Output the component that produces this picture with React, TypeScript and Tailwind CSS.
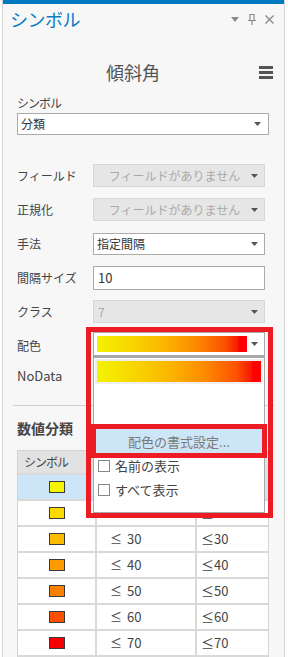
import React from "react";

const FONT = "font-['Segoe_UI','Noto_Sans_CJK_JP',sans-serif]";
const GRAD =
  "bg-[linear-gradient(90deg,#f3f300_0%,#f9d200_25%,#fcb400_45%,#fd8c00_65%,#fc5200_85%,#f81800_94%,#ff0000_95%)]";

const Arrow = () => (
  <svg width="7" height="4" viewBox="0 0 7 4" className="shrink-0">
    <path d="M0 0h7L3.5 4z" fill="#555" />
  </svg>
);

type RowProps = { label: string; children: React.ReactNode };
const FormRow = ({ label, children }: RowProps) => (
  <div className="flex h-[23px] items-center">
    <div className="w-[76px] text-[12px] text-[#444]">{label}</div>
    <div className="w-[172px]">{children}</div>
  </div>
);

const DisabledSelect = ({ text, center }: { text: string; center?: boolean }) => (
  <div className="flex h-[23px] items-center border border-[#d8d8d8] bg-[#e6e6e6] pl-[4px] pr-[6px]">
    <span className={`flex-1 text-[12px] text-[#a9a9a9] ${center ? "text-center" : ""}`}>{text}</span>
    <Arrow />
  </div>
);

const swatches = [
  { c: "bg-[#f5f500]", v: "10" },
  { c: "bg-[#f9d900]", v: "20" },
  { c: "bg-[#fcbb00]", v: "30" },
  { c: "bg-[#fd9c00]", v: "40" },
  { c: "bg-[#fb8000]", v: "50" },
  { c: "bg-[#fb5000]", v: "60" },
  { c: "bg-[#f80000]", v: "70" },
];

export default function App() {
  return (
    <div className={`relative h-[657px] w-[288px] overflow-hidden bg-white ${FONT}`}>
      <div className="ml-[2px] h-full w-[283px] overflow-hidden border-x border-[#d3d3d3] bg-[#f7f7f7]">
        {/* title bar */}
        <div className="-ml-[3px] h-[4px] w-[286px] bg-[#0079c1]" />
        <div className="flex h-[30px] items-center pl-[7px] pr-[10px]">
          <span className="flex-1 text-[18px] leading-none tracking-[-0.5px] text-[#0a7bc4]">シンボル</span>
          <div className="flex items-center gap-[9px]">
            <svg width="8" height="5" viewBox="0 0 8 5">
              <path d="M0 0h8L4 5z" fill="#8a8a8a" />
            </svg>
            <svg width="8" height="11" viewBox="0 0 8 11">
              <path d="M2 0.5h4v6H2zM0 6.5h8M4 6.5v4.5" stroke="#8a8a8a" strokeWidth="1.2" fill="none" />
            </svg>
            <svg width="9" height="9" viewBox="0 0 9 9">
              <path d="M0.5 0.5l8 8M8.5 0.5l-8 8" stroke="#8a8a8a" strokeWidth="1.3" />
            </svg>
          </div>
        </div>

        {/* heading */}
        <div className="mt-[24px] flex h-[28px] items-center pr-[11px]">
          <span className="flex-1 pl-[4px] text-center text-[18px] text-[#555]">傾斜角</span>
          <div className="flex w-[14px] flex-col gap-[2px]">
            <div className="h-[3px] bg-[#555]" />
            <div className="h-[3px] bg-[#555]" />
            <div className="h-[3px] bg-[#555]" />
          </div>
        </div>

        <div className="pl-[14px]">
          <div className="mt-[10px] text-[12px] leading-[14px] tracking-[-1px] text-[#444]">シンボル</div>
          <div className="mt-[3px] flex h-[22px] w-[252px] items-center border border-[#ababab] bg-white pl-[3px] pr-[7px]">
            <span className="flex-1 text-[12px] text-[#333]">分類</span>
            <Arrow />
          </div>

          <div className="mt-[29px] flex flex-col gap-[11px]">
            <FormRow label="フィールド">
              <DisabledSelect text="フィールドがありません" center />
            </FormRow>
            <FormRow label="正規化">
              <DisabledSelect text="フィールドがありません" center />
            </FormRow>
            <FormRow label="手法">
              <div className="flex h-[22px] items-center border border-[#ababab] bg-white pl-[3px] pr-[6px]">
                <span className="flex-1 text-[12px] text-[#333]">指定間隔</span>
                <Arrow />
              </div>
            </FormRow>
            <FormRow label="間隔サイズ">
              <div className="flex h-[24px] items-center border border-[#ababab] bg-white pl-[4px]">
                <span className="text-[13px] text-[#333]">10</span>
              </div>
            </FormRow>
            <FormRow label="クラス">
              <DisabledSelect text="7" />
            </FormRow>
            <FormRow label="配色">
              <div className="h-[23px] border border-[#ababab] bg-white" />
            </FormRow>
          </div>
          <div className="mt-[7px] flex h-[23px] items-center text-[13px] text-[#444]">NoData</div>
        </div>

        <div className="mx-[10px] mt-[18px] h-px bg-[#d0d0d0]" />

        <div className="pl-[14px]">
          <div className="mt-[11px] text-[14px] font-bold leading-[22px] text-[#444]">数値分類</div>
          <div className="mt-[11px] w-[252px] border border-[#d4d4d4] bg-white">
            <div className="grid h-[22px] grid-cols-[79px_100px_1fr] bg-[#e2e2e2] text-[12px] text-[#444]">
              <div className="flex items-center border-r-2 border-[#d4d4d4] pl-[6px] tracking-[-1px]">シンボル</div>
              <div className="flex items-center border-r-2 border-[#d4d4d4] pl-[6px]">上限値</div>
              <div className="flex items-center pl-[6px]">ラベル</div>
            </div>
            {swatches.map((s, i) => (
              <div
                key={s.v}
                className={`grid h-[26px] grid-cols-[79px_100px_1fr] border-t-2 border-[#d9d9d9] text-[13px] text-[#444] ${
                  i === 0 ? "bg-[#cde6f7]" : "bg-white"
                }`}
              >
                <div className="flex items-center justify-center border-r-2 border-[#d9d9d9]">
                  <div className={`h-[12px] w-[16px] border border-[#3a3a3a] ${s.c}`} />
                </div>
                <div className="flex items-center border-r-2 border-[#d9d9d9] pl-[13px]">
                  <span className="w-[17px] text-[12px]">≤</span>
                  <span>{s.v}</span>
                </div>
                <div className="flex items-center pl-[4px]">≤{s.v}</div>
              </div>
            ))}
            <div className="h-[26px] border-t-2 border-[#d9d9d9] bg-white" />
          </div>
        </div>
      </div>

      {/* open color ramp dropdown */}
      <div className="absolute left-[93px] top-[332px] w-[172px]">
        <div className="flex h-[24px] items-center border border-[#a8a8a8] bg-white pl-[3px] pr-[6px]">
          <div className={`h-[16px] w-[150px] ${GRAD}`} />
          <div className="flex-1" />
          <Arrow />
        </div>
        <div className="flex h-[157px] flex-col border border-t-2 border-[#a8a8a8] bg-white">
          <div className="mx-[1px] mt-px bg-[#efefef] p-[2px]">
            <div className={`h-[21px] ${GRAD}`} />
          </div>
          <div className="h-[45px]" />
          <div className="mx-[-1px] flex h-[25px] items-center justify-center bg-[#cde6f7] text-[13px] text-[#7a7a7a]">
            配色の書式設定...
          </div>
          <div className="mt-[4px] flex flex-col gap-[8px] pl-[4px] text-[13px] text-[#444]">
            <div className="flex h-[16px] items-center gap-[5px]">
              <div className="h-[12px] w-[12px] border border-[#888] bg-white" />
              名前の表示
            </div>
            <div className="flex h-[16px] items-center gap-[5px]">
              <div className="h-[12px] w-[12px] border border-[#888] bg-white" />
              すべて表示
            </div>
          </div>
        </div>
      </div>

      {/* red annotation boxes */}
      <div className="pointer-events-none absolute left-[86px] top-[327px] h-[191px] w-[187px] border-[5px] border-[#ed1c24]" />
      <div className="pointer-events-none absolute left-[91px] top-[424px] h-[34px] w-[176px] border-[5px] border-[#ed1c24]" />
    </div>
  );
}
